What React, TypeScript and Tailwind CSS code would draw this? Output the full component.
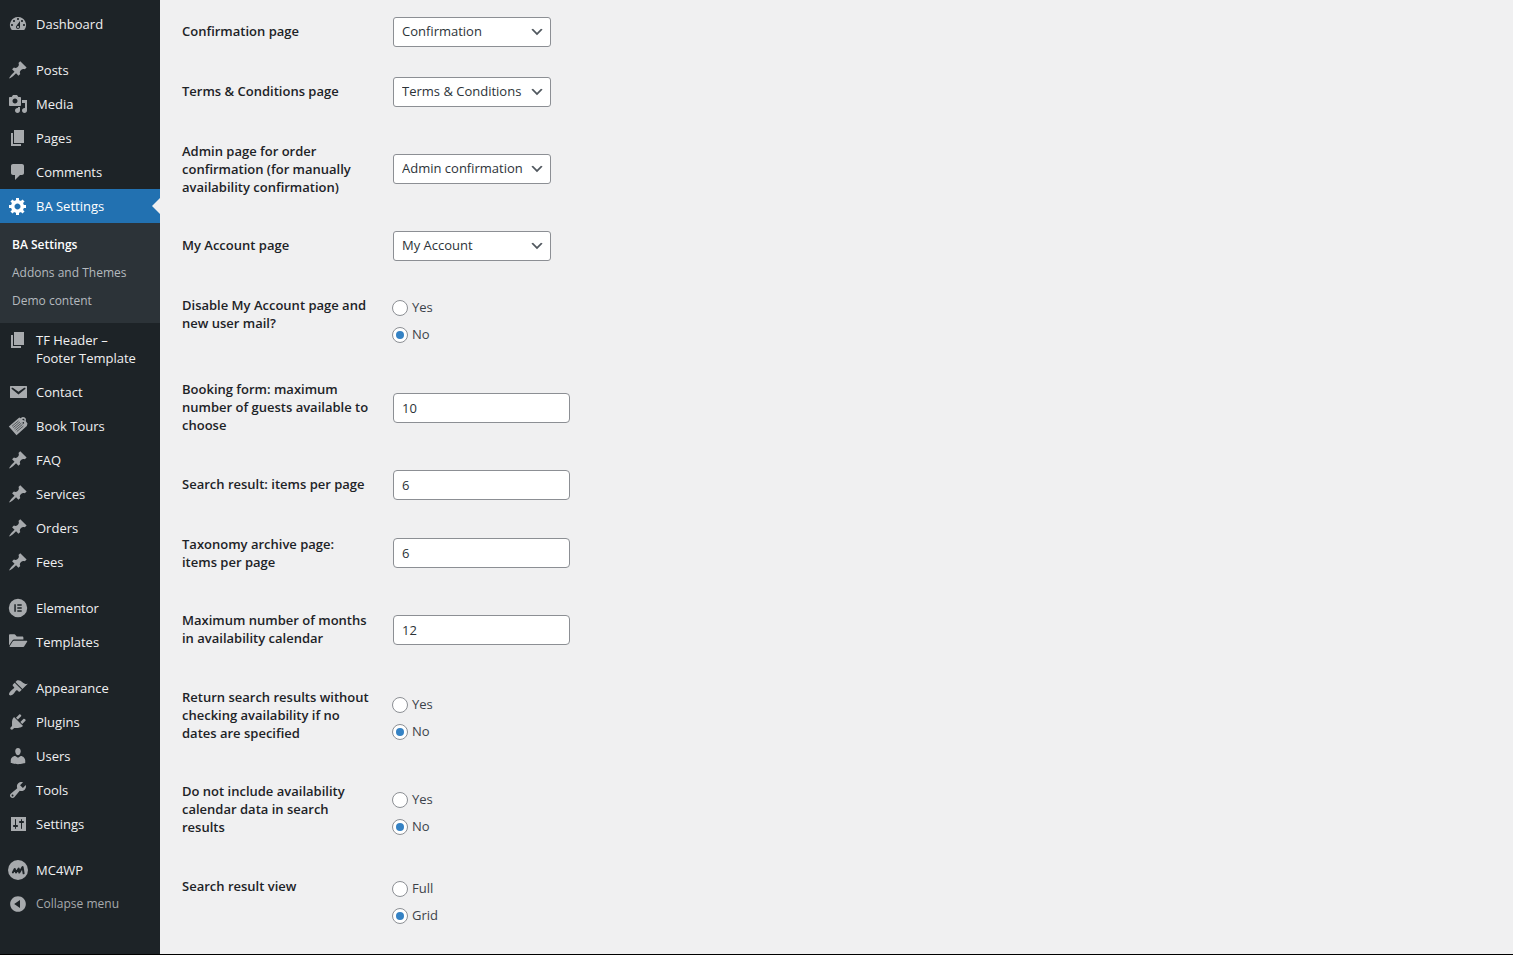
import { useState } from "react";
import type { ReactNode } from "react";

function Glyph({ d }: { d: string }) {
  return (
    <svg className="size-5" viewBox="0 0 20 20" fill="currentColor" fillRule="evenodd" aria-hidden="true">
      <path d={d} />
    </svg>
  );
}

const pin = (
  <Glyph d="M10.44 3.02l1.82-1.82 6.36 6.35-1.83 1.82c-1.05-.68-2.48-.57-3.41.36l-.75.75c-.92.93-1.04 2.35-.35 3.41l-1.83 1.82-2.41-2.41-2.8 2.79c-.42.42-3.38 2.71-3.8 2.29s1.86-3.39 2.28-3.81l2.79-2.79L4.1 9.36l1.83-1.82c1.05.69 2.48.57 3.4-.36l.75-.75c.93-.92 1.05-2.35.36-3.41z" />
);
const pages = <Glyph d="M6 15V2h10v13H6zm-1 1h8v2H3V5h2v11z" />;
const dashboard = (
  <Glyph d="M3.76 16h12.48A7.998 7.998 0 0 0 10 3a7.998 7.998 0 0 0-6.24 13zM10 4c.55 0 1 .45 1 1s-.45 1-1 1-1-.45-1-1 .45-1 1-1zM6 6c.55 0 1 .45 1 1s-.45 1-1 1-1-.45-1-1 .45-1 1-1zm8 0c.55 0 1 .45 1 1s-.45 1-1 1-1-.45-1-1 .45-1 1-1zm-5.37 5.55L12 7v6c0 1.1-.9 2-2 2s-2-.9-2-2c0-.57.24-1.08.63-1.45zM4 10c.55 0 1 .45 1 1s-.45 1-1 1-1-.45-1-1 .45-1 1-1zm12 0c.55 0 1 .45 1 1s-.45 1-1 1-1-.45-1-1 .45-1 1-1zm-5 3c0-.55-.45-1-1-1s-1 .45-1 1 .45 1 1 1 1-.45 1-1z" />
);
const media = (
  <Glyph d="M13 11V4c0-.55-.45-1-1-1h-1.67L9 1H5L3.67 3H2c-.55 0-1 .45-1 1v7c0 .55.45 1 1 1h10c.55 0 1-.45 1-1zM7 4.5c1.38 0 2.5 1.12 2.5 2.5S8.38 9.5 7 9.5 4.5 8.38 4.5 7 5.62 4.5 7 4.5zM14 6h5v10.5c0 1.38-1.12 2.5-2.5 2.5S14 17.88 14 16.5s1.12-2.5 2.5-2.5c.17 0 .34.02.5.05V9h-3V6zm-4 8.05V13h2v3.5c0 1.38-1.12 2.5-2.5 2.5S7 17.88 7 16.5 8.12 14 9.5 14c.17 0 .34.02.5.05z" />
);
const comments = (
  <Glyph d="M5 2h9c1.1 0 2 .9 2 2v7c0 1.1-.9 2-2 2h-2l-5 5v-5H5c-1.1 0-2-.9-2-2V4c0-1.1.9-2 2-2z" />
);
const gear = (
  <Glyph d="M18 12h-2.18c-.17.7-.44 1.35-.81 1.93l1.54 1.54-2.1 2.1-1.54-1.54c-.58.36-1.23.63-1.91.79V19H8v-2.18c-.68-.16-1.33-.43-1.91-.79l-1.54 1.54-2.12-2.12 1.54-1.54c-.36-.58-.63-1.23-.79-1.91H1V9.03h2.17c.16-.7.44-1.35.8-1.94L2.43 5.55l2.1-2.1 1.54 1.54c.58-.37 1.24-.64 1.93-.81V2h3v2.18c.68.16 1.33.43 1.91.79l1.54-1.54 2.12 2.12-1.54 1.54c.36.59.64 1.24.8 1.94H18V12zm-8.5 1.5c1.66 0 3-1.34 3-3s-1.34-3-3-3-3 1.34-3 3 1.34 3 3 3z" />
);
const email = (
  <Glyph d="M2.6 4h15.8c.4 0 .6.2.6.6v10.8c0 .4-.2.6-.6.6H2.6c-.4 0-.6-.2-.6-.6V4.600c0-.4.2-.6.6-.6zm7.890 8.600l6.740-5.530c.24-.2.43-.66.13-1.070-.29-.41-.82-.42-1.170-.17l-5.700 3.860L4.800 5.830c-.35-.25-.88-.24-1.170.17-.3.41-.11.87.13 1.070z" />
);
const folder = (
  <Glyph d="M1.800 2.300h4.500c.5 0 .9.2 1.200.6l1.300 1.600h5.400c.8 0 1.200.5 1.200 1.200v1.800H6.200c-.9 0-1.500.4-2 1.200L1 13.500V3.200c0-.5.3-.9.8-.9zM6.200 8.700h12.200c.8 0 1 .5.7 1.100l-2.700 4.200c-.4.7-.8 1-1.600 1H2.400c-.7 0-.9-.5-.6-1.100l2.700-4.200c.4-.7.9-1 1.700-1z" />
);
const brush = (
  <Glyph d="M14.48 11.06L7.41 3.99l1.5-1.5c.5-.56 2.3-.47 3.51.32 1.21.8 1.43 1.28 2.91 2.1 1.18.64 2.45 1.26 4.45.85zm-.71.71L6.7 4.7 4.93 6.47c-.39.39-.39 1.02 0 1.41l1.06 1.06c.39.39.39 1.03 0 1.42-.6.6-1.43 1.11-2.21 1.69-.35.26-.7.53-1.01.84C1.43 14.23.4 16.08 1.4 17.07c.99 1 2.84-.03 4.18-1.36.31-.31.58-.66.85-1.02.57-.78 1.08-1.61 1.69-2.21.39-.39 1.02-.39 1.41 0l1.06 1.06c.39.39 1.02.39 1.41 0z" />
);
const plug = (
  <Glyph d="M13.11 4.36L9.87 7.6 8 5.73l3.24-3.24c.35-.34 1.05-.2 1.56.32.52.51.66 1.21.31 1.55zm-8 1.77l.91-1.12 9.01 9.01-1.19.84c-.71.71-2.63 1.16-3.82 1.16H6.14L4.9 17.26c-.59.59-1.54.59-2.12 0-.59-.58-.59-1.53 0-2.12l1.24-1.24v-3.88c0-1.13.4-3.19 1.09-3.89zm7.26 3.97l3.24-3.24c.34-.35 1.04-.21 1.55.31.52.51.66 1.21.31 1.55l-3.24 3.25z" />
);
const user = (
  <Glyph d="M10 9.25c-2.27 0-2.73-3.44-2.73-3.44C7 4.02 7.82 2 9.97 2c2.16 0 2.98 2.02 2.71 3.81 0 0-.41 3.44-2.68 3.44zm0 2.57L12.72 10c2.39 0 4.52 2.33 4.52 4.53v2.49s-3.65 1.13-7.24 1.13c-3.65 0-7.24-1.13-7.24-1.13v-2.49c0-2.25 1.94-4.48 4.47-4.48z" />
);
const wrench = (
  <Glyph d="M16.68 9.77c-1.34 1.34-3.3 1.67-4.95.99l-5.41 6.52c-.99.99-2.59.99-3.58 0s-.99-2.59 0-3.57l6.52-5.42c-.68-1.65-.35-3.61.99-4.95 1.28-1.28 3.12-1.62 4.72-1.06l-2.89 2.89 2.82 2.82 2.86-2.87c.53 1.58.18 3.39-1.08 4.65zM3.81 16.21c.4.39 1.04.39 1.43 0 .4-.4.4-1.04 0-1.43-.39-.4-1.03-.4-1.43 0-.39.39-.39 1.03 0 1.43z" />
);
const sliders = (
  <Glyph d="M18 17V3H3v14h15zM8 11h1c.55 0 1 .45 1 1s-.45 1-1 1H8v1.500c0 .28-.22.5-.5.5s-.5-.22-.5-.5V13H6c-.55 0-1-.45-1-1s.45-1 1-1h1V5.500c0-.28.22-.5.5-.5s.5.22.5.5V11zm5-2h-1c-.55 0-1-.45-1-1s.45-1 1-1h1V5.500c0-.28.22-.5.5-.5s.5.22.5.5V7h1c.55 0 1 .45 1 1s-.45 1-1 1h-1v5.500c0 .28-.22.5-.5.5s-.5-.22-.5-.5V9z" />
);
const collapse = (
  <Glyph d="M10 2.16c4.33 0 7.84 3.51 7.84 7.84s-3.51 7.84-7.84 7.84S2.16 14.33 2.16 10 5.67 2.16 10 2.16zm2 11.72V6.12L6.18 9.97z" />
);
const elementor = (
  <Glyph d="M10 .8a9.200 9.200 0 1 1 0 18.400a9.200 9.200 0 0 1 0-18.400zM6.300 6.200v7.600h1.500V6.200zM9.300 6.200v1.500h4.400V6.200zM9.300 9.250v1.500h4.400v-1.500zM9.300 12.300v1.500h4.400v-1.500z" />
);
const ticket = (
  <svg className="size-5" viewBox="0 0 20 20" aria-hidden="true">
    <path
      fill="currentColor"
      fillRule="evenodd"
      d="M.8 10.400L11.300 1.500l1.500.7c1-1.200 2.700-1.500 4-.6 1.200.8 1.500 2.200.9 3.500l1.800 2.400-.7 2.500L8.500 19.200zM14 3.200l2.300 1.600c.4-.8.2-1.500-.4-1.900-.6-.4-1.300-.3-1.900.3zM15.300 6.100a.8.8 0 1 0 0 1.600.8.8 0 0 0 0-1.600z"
    />
    <path
      stroke="#1d2327"
      strokeWidth="0.600"
      d="M4 10.300l6.600-5.500M5.200 11.600l6.800-5.700M6.400 12.900l6.900-5.800M7.600 14.200l6.900-5.800M8.800 15.500l6.600-5.500"
    />
  </svg>
);
const mc4wp = (
  <svg className="size-5" viewBox="0 0 20 20" fill="none" aria-hidden="true">
    <circle cx="10" cy="10" r="10" fill="currentColor" />
    <path
      stroke="#1d2327"
      strokeWidth="2"
      strokeLinecap="round"
      strokeLinejoin="round"
      d="M4.900 12.400l1.800-3.400 1.300 3.500 2.700-3.900.6 4 3.300-5.600 1 6.300"
    />
  </svg>
);

type Item = { label: string; icon: ReactNode; children?: string[] };

const groups: Item[][] = [
  [{ label: "Dashboard", icon: dashboard }],
  [
    { label: "Posts", icon: pin },
    { label: "Media", icon: media },
    { label: "Pages", icon: pages },
    { label: "Comments", icon: comments },
    { label: "BA Settings", icon: gear, children: ["BA Settings", "Addons and Themes", "Demo content"] },
    { label: "TF Header –\nFooter Template", icon: pages },
    { label: "Contact", icon: email },
    { label: "Book Tours", icon: ticket },
    { label: "FAQ", icon: pin },
    { label: "Services", icon: pin },
    { label: "Orders", icon: pin },
    { label: "Fees", icon: pin },
  ],
  [
    { label: "Elementor", icon: elementor },
    { label: "Templates", icon: folder },
  ],
  [
    { label: "Appearance", icon: brush },
    { label: "Plugins", icon: plug },
    { label: "Users", icon: user },
    { label: "Tools", icon: wrench },
    { label: "Settings", icon: sliders },
  ],
  [{ label: "MC4WP", icon: mc4wp }],
];

function MenuItem({ item }: { item: Item }) {
  const active = Boolean(item.children);
  return (
    <li>
      <a
        href="#"
        className={`relative flex items-start py-2 leading-[18px] ${active ? "bg-[#2271b1] text-white" : "text-[#f0f0f1] hover:text-[#72aee6]"}`}
      >
        <span
          className={`flex h-[18px] w-9 shrink-0 items-center justify-center ${active ? "text-white" : "text-[#a7aaad]"}`}
        >
          {item.icon}
        </span>
        <span className="whitespace-pre-line">{item.label}</span>
        {active && (
          <span className="absolute top-1/2 right-0 -translate-y-1/2 border-8 border-transparent border-r-[#f0f0f1]" />
        )}
      </a>
      {item.children && (
        <ul className="bg-[#2c3338] py-2 text-xs leading-7">
          {item.children.map((child, i) => (
            <li key={child}>
              <a href="#" className={`block px-3 leading-7 ${i === 0 ? "font-semibold text-white" : "text-[#b4b9be]"}`}>
                {child}
              </a>
            </li>
          ))}
        </ul>
      )}
    </li>
  );
}

function Sidebar() {
  return (
    <nav aria-label="Main menu" className="w-40 shrink-0 bg-[#1d2327] pt-[7px] text-[13px]">
      <div className="flex flex-col gap-3">
        {groups.map((items) => (
          <ul key={items[0].label}>
            {items.map((item) => (
              <MenuItem key={item.label} item={item} />
            ))}
          </ul>
        ))}
      </div>
      <button type="button" className="flex w-full items-center py-2 text-xs leading-[18px] text-[#a7aaad]">
        <span className="flex h-[18px] w-9 items-center justify-center">{collapse}</span>
        Collapse menu
      </button>
    </nav>
  );
}

type Field = {
  id: string;
  label: string;
  kind: "select" | "text" | "radio";
  value: string;
  options?: string[];
  height?: string;
};

const fields: Field[] = [
  { id: "confirmation", label: "Confirmation page", kind: "select", value: "Confirmation" },
  { id: "terms", label: "Terms & Conditions page", kind: "select", value: "Terms & Conditions" },
  {
    id: "admin",
    label: "Admin page for order\nconfirmation (for manually\navailability confirmation)",
    kind: "select",
    value: "Admin confirmation",
  },
  { id: "account", label: "My Account page", kind: "select", value: "My Account" },
  {
    id: "disable-account",
    label: "Disable My Account page and\nnew user mail?",
    kind: "radio",
    value: "No",
    options: ["Yes", "No"],
    height: "min-h-[84px]",
  },
  {
    id: "guests",
    label: "Booking form: maximum\nnumber of guests available to\nchoose",
    kind: "text",
    value: "10",
    height: "min-h-[95px]",
  },
  { id: "per-page", label: "Search result: items per page", kind: "text", value: "6" },
  {
    id: "taxonomy",
    label: "Taxonomy archive page:\nitems per page",
    kind: "text",
    value: "6",
  },
  {
    id: "months",
    label: "Maximum number of months\nin availability calendar",
    kind: "text",
    value: "12",
    height: "min-h-[77px]",
  },
  {
    id: "unchecked",
    label: "Return search results without\nchecking availability if no\ndates are specified",
    kind: "radio",
    value: "No",
    options: ["Yes", "No"],
  },
  {
    id: "calendar-data",
    label: "Do not include availability\ncalendar data in search\nresults",
    kind: "radio",
    value: "No",
    options: ["Yes", "No"],
    height: "min-h-[95px]",
  },
  {
    id: "view",
    label: "Search result view",
    kind: "radio",
    value: "Grid",
    options: ["Full", "Grid"],
    height: "min-h-[84px]",
  },
];

function Control({ field }: { field: Field }) {
  const [value, setValue] = useState(field.value);

  if (field.kind === "select") {
    return (
      <div className="relative">
        <select
          id={field.id}
          value={value}
          onChange={(e) => setValue(e.target.value)}
          className="h-[30px] w-[158px] appearance-none rounded-[3px] border border-[#8c8f94] bg-white pr-6 pl-2 text-[13px] text-[#2c3338]"
        >
          <option>{field.value}</option>
        </select>
        <svg
          className="pointer-events-none absolute top-[7px] right-1.5 size-4"
          viewBox="0 0 20 20"
          fill="#50575e"
          aria-hidden="true"
        >
          <path d="M5 6l5 5 5-5 2 1-7 7-7-7 2-1z" />
        </svg>
      </div>
    );
  }

  if (field.kind === "text") {
    return (
      <input
        id={field.id}
        type="text"
        value={value}
        onChange={(e) => setValue(e.target.value)}
        className="h-[30px] w-[177px] rounded-[4px] border border-[#8c8f94] bg-white px-2 text-[13px] text-[#2c3338]"
      />
    );
  }

  return (
    <div role="radiogroup" aria-labelledby={`${field.id}-label`} className="-ml-px pt-[7px]">
      {field.options?.map((option) => (
        <label key={option} className="flex h-[27px] items-center gap-1">
          <input
            type="radio"
            name={field.id}
            checked={value === option}
            onChange={() => setValue(option)}
            className="flex size-4 appearance-none items-center justify-center rounded-full border border-[#8c8f94] bg-white before:size-2 before:rounded-full checked:before:bg-[#3582c4]"
          />
          {option}
        </label>
      ))}
    </div>
  );
}

function SettingsForm() {
  return (
    <form className="min-w-0 flex-1 pt-0.5 pl-[22px]">
      {fields.map((field) => (
        <div key={field.id} className={`flex ${field.height ?? "min-h-[60px]"}`}>
          <div className="w-[211px] shrink-0 py-5 leading-[18px] font-semibold whitespace-pre text-[#1d2327]">
            {field.kind === "radio" ? (
              <span id={`${field.id}-label`}>{field.label}</span>
            ) : (
              <label htmlFor={field.id}>{field.label}</label>
            )}
          </div>
          <div className="flex items-center">
            <Control field={field} />
          </div>
        </div>
      ))}
    </form>
  );
}

export default function App() {
  return (
    <div className="flex min-h-screen border-b border-black bg-[#f0f0f1] font-['Open_Sans','Noto_Sans',sans-serif] text-[13px] text-[#3c434a]">
      <Sidebar />
      <SettingsForm />
    </div>
  );
}
